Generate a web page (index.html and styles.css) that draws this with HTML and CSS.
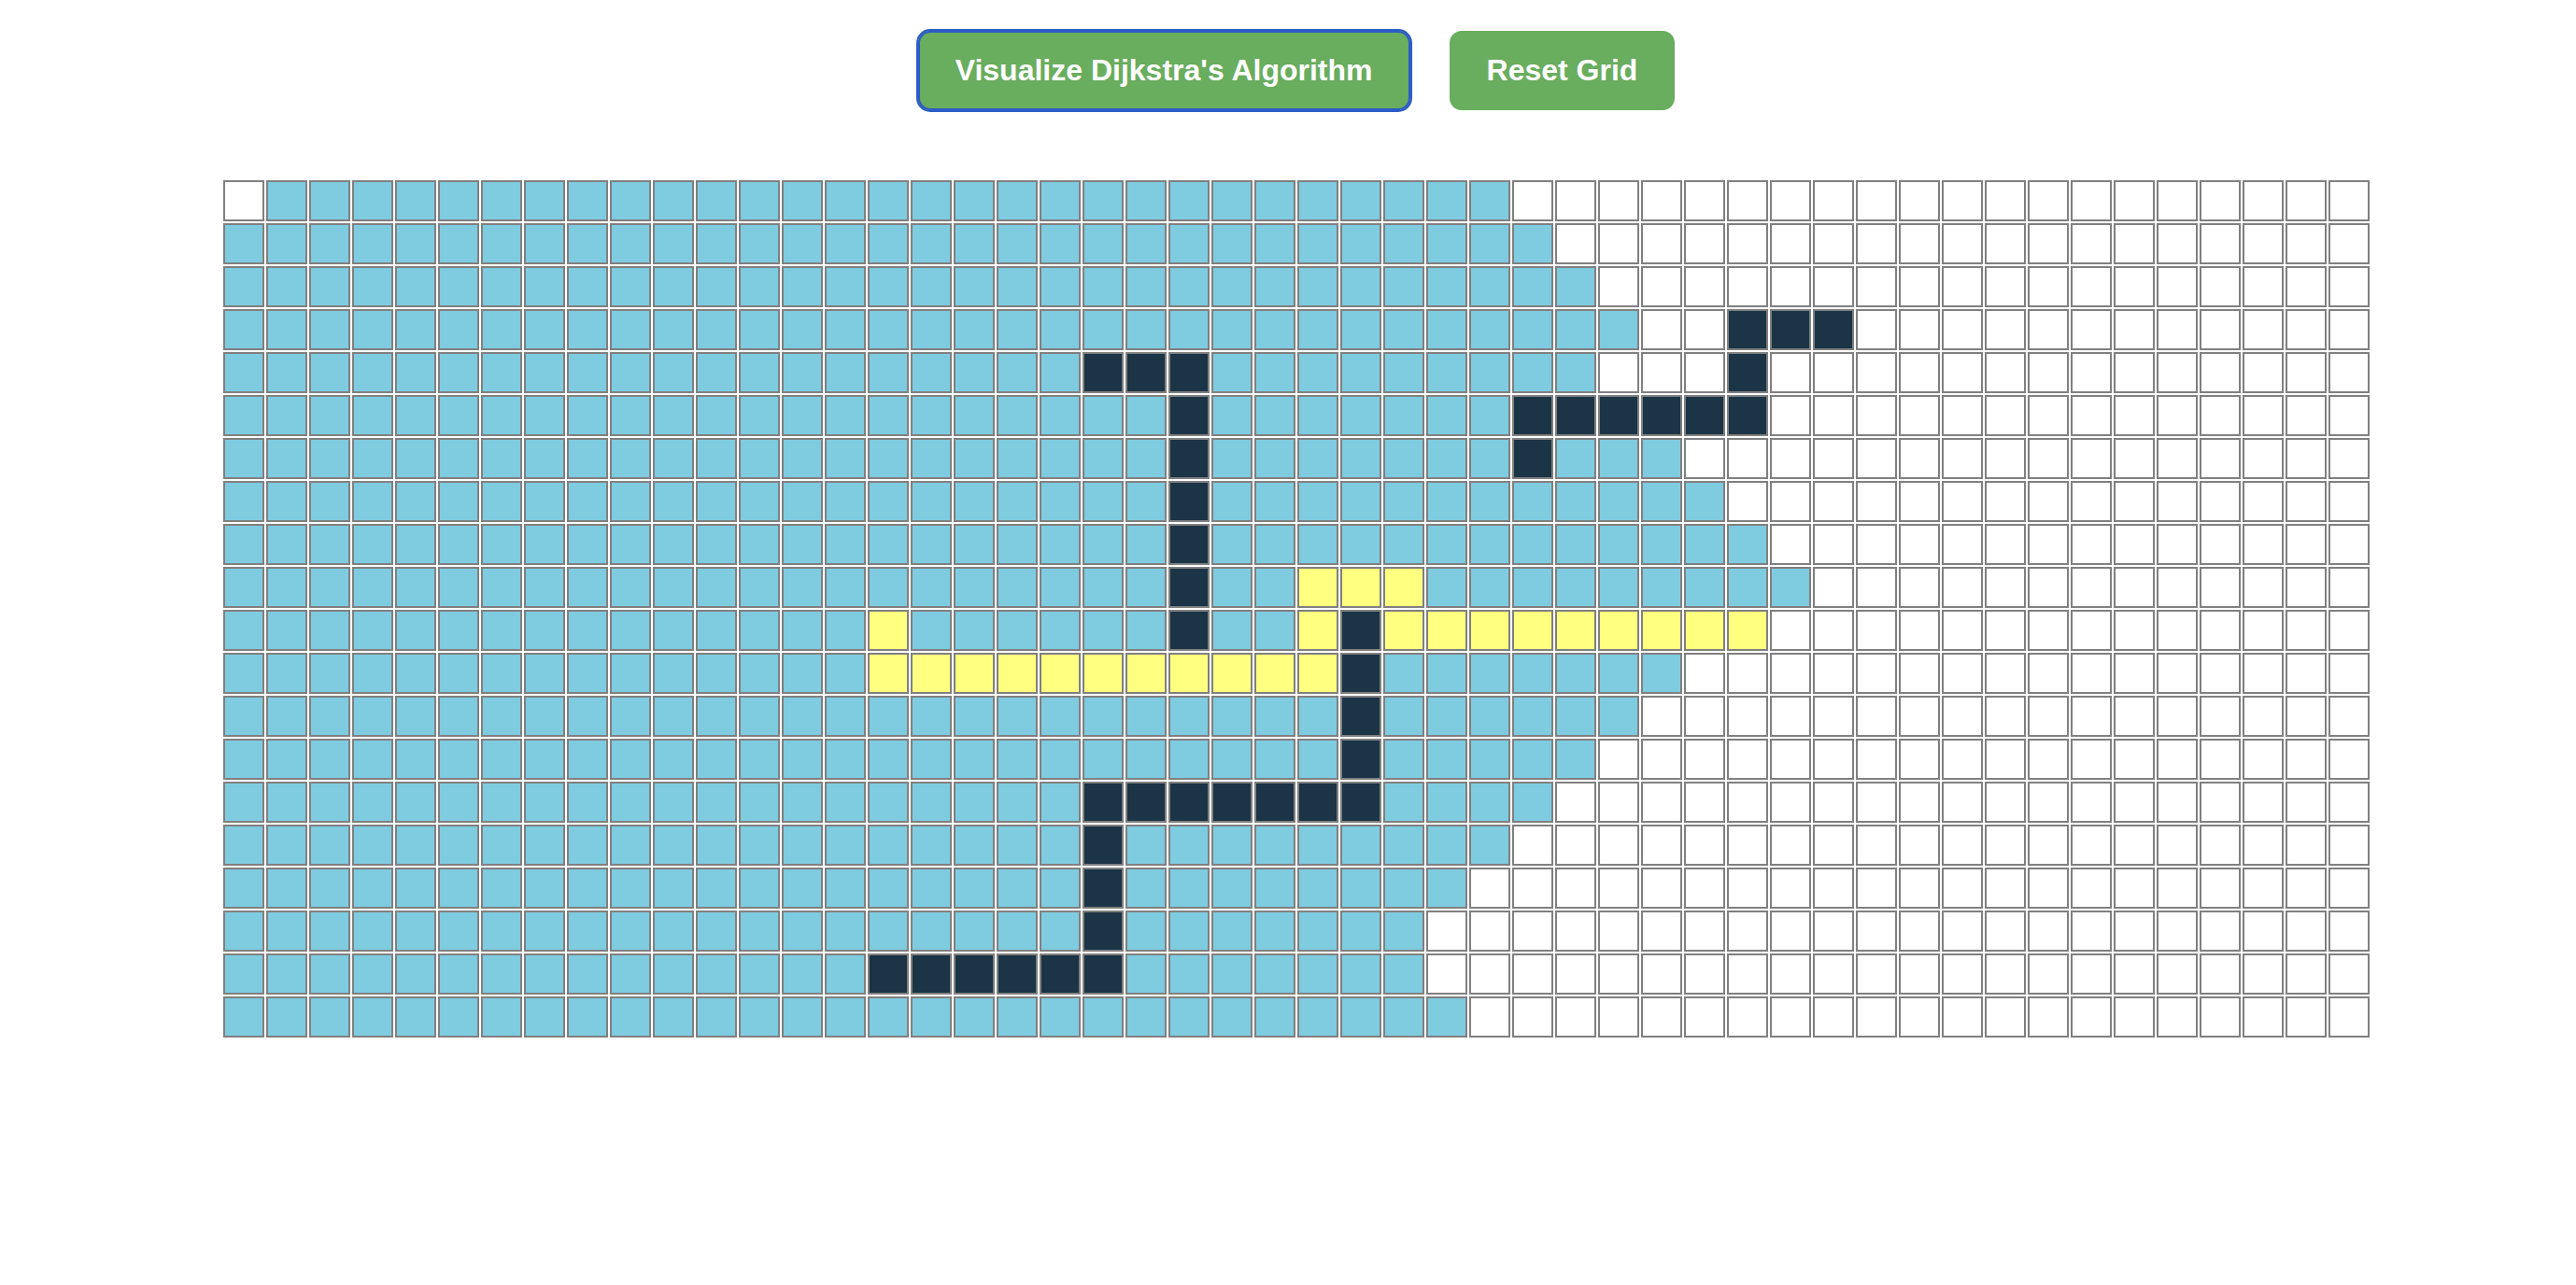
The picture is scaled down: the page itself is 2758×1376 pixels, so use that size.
FILE: index.html
```html
<!DOCTYPE html>
<html lang="en">
<head>
<meta charset="utf-8">
<title>Dijkstra Visualizer</title>
<link rel="stylesheet" href="styles.css">
</head>
<body>
<div class="page">
  <div class="toolbar">
    <button class="btn btn-focused" type="button">Visualize Dijkstra's Algorithm</button>
    <button class="btn" type="button">Reset Grid</button>
  </div>
  <div class="grid" id="grid"></div>
</div>
<script src="script.js"></script>
</body>
</html>
```

FILE: styles.css
```css
* { box-sizing: border-box; }

html, body {
  margin: 0;
  padding: 0;
  background: #ffffff;
}

body {
  font-family: "Liberation Sans", Arial, sans-serif;
}

.page {
  display: flex;
  flex-direction: column;
  align-items: center;
  padding: 33px 0 0 18px;
}

.toolbar {
  display: flex;
  gap: 42px;
}

.btn {
  font-family: "Liberation Sans", Arial, sans-serif;
  font-weight: bold;
  font-size: 32px;
  line-height: 37px;
  color: #ffffff;
  background: #69ad5e;
  border: none;
  border-radius: 13px;
  padding: 24px 40px;
  margin: 0;
  cursor: pointer;
}

.btn-focused {
  box-shadow: 0 0 0 2px #2c5cc6, inset 0 0 0 2px #2c5cc6;
}

.grid {
  margin-top: 74px;
  display: grid;
  grid-template-columns: repeat(50, 46px);
}

.cell {
  width: 44px;
  height: 44px;
  margin: 1px;
  border: 2px solid #808080;
  background: #ffffff;
}

.cell-visited { background: #7fcbe0; }
.cell-wall { background: #1b3446; }
.cell-path { background: #ffff80; }
```

FILE: script.js
```js
(function () {
  var rows = [
    "w1 b29 w20",
    "b31 w19",
    "b32 w18",
    "b33 w2 d3 w12",
    "b20 d3 b9 w3 d1 w14",
    "b22 d1 b7 d6 w14",
    "b22 d1 b7 d1 b3 w16",
    "b22 d1 b12 w15",
    "b22 d1 b13 w14",
    "b22 d1 b2 y3 b9 w13",
    "b15 y1 b6 d1 b2 y1 d1 y9 w14",
    "b15 y11 d1 b7 w16",
    "b26 d1 b6 w17",
    "b26 d1 b5 w18",
    "b20 d7 b4 w19",
    "b20 d1 b9 w20",
    "b20 d1 b8 w21",
    "b20 d1 b7 w22",
    "b15 d6 b7 w22",
    "b29 w21"
  ];
  var cls = { w: "cell", b: "cell cell-visited", d: "cell cell-wall", y: "cell cell-path" };
  var grid = document.getElementById("grid");
  var frag = document.createDocumentFragment();
  rows.forEach(function (r, ri) {
    r.split(" ").forEach(function (tok) {
      var t = tok.charAt(0);
      var n = parseInt(tok.slice(1), 10);
      for (var i = 0; i < n; i++) {
        var c = document.createElement("div");
        c.className = cls[t];
        frag.appendChild(c);
      }
    });
  });
  grid.appendChild(frag);
})();
```
